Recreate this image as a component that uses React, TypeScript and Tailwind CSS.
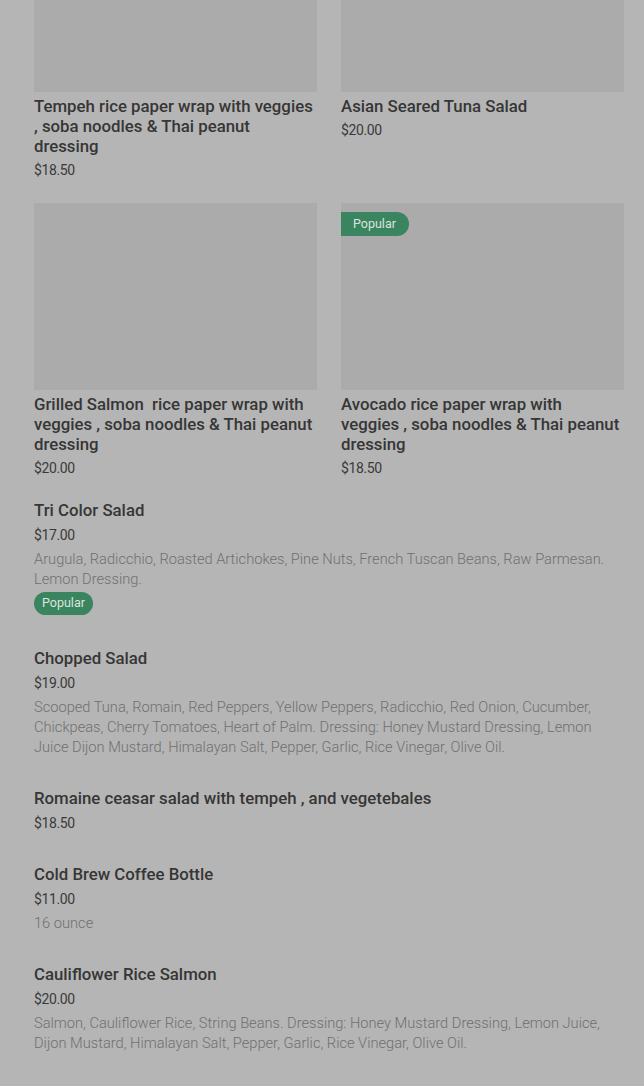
type GridItem = {
  title: string;
  price: string;
  popular?: boolean;
};

type ListItem = {
  title: string;
  price: string;
  description?: string;
  popular?: boolean;
};

const gridItems: GridItem[] = [
  { title: 'Tempeh rice paper wrap with veggies , soba noodles & Thai peanut dressing', price: '$18.50' },
  { title: 'Asian Seared Tuna Salad', price: '$20.00' },
  { title: 'Grilled Salmon\u00a0 rice paper wrap with veggies , soba noodles & Thai peanut dressing', price: '$20.00' },
  { title: 'Avocado rice paper wrap with veggies , soba noodles & Thai peanut dressing', price: '$18.50', popular: true },
];

const listItems: ListItem[] = [
  {
    title: 'Tri Color Salad',
    price: '$17.00',
    description: 'Arugula, Radicchio, Roasted Artichokes, Pine Nuts, French Tuscan Beans, Raw Parmesan. Lemon Dressing.',
    popular: true,
  },
  {
    title: 'Chopped Salad',
    price: '$19.00',
    description:
      'Scooped Tuna, Romain, Red Peppers, Yellow Peppers, Radicchio, Red Onion, Cucumber, Chickpeas, Cherry Tomatoes, Heart of Palm. Dressing: Honey Mustard Dressing, Lemon Juice Dijon Mustard, Himalayan Salt, Pepper, Garlic, Rice Vinegar, Olive Oil.',
  },
  { title: 'Romaine ceasar salad with tempeh , and vegetebales', price: '$18.50' },
  { title: 'Cold Brew Coffee Bottle', price: '$11.00', description: '16 ounce' },
  {
    title: 'Cauliflower Rice Salmon',
    price: '$20.00',
    description:
      'Salmon, Cauliflower Rice, String Beans. Dressing: Honey Mustard Dressing, Lemon Juice, Dijon Mustard, Himalayan Salt, Pepper, Garlic, Rice Vinegar, Olive Oil.',
  },
  { title: 'Grilled Chicken Caesar Wrap with Romaine & Parmesan', price: '$16.00' },
];

function Badge({ onImage }: { onImage?: boolean }) {
  return (
    <span
      className={
        onImage
          ? 'inline-flex items-center h-[24px] pl-[12px] pr-[13px] rounded-r-full bg-[#3b8460] text-[12.5px] text-[#d9e6de]'
          : 'inline-flex items-center h-[23px] px-[8px] rounded-full bg-[#3b8460] text-[12.5px] text-[#d9e6de]'
      }
    >
      Popular
    </span>
  );
}

export default function App() {
  return (
    <div className="min-h-[1086px] bg-[#b5b5b5] pl-[34px] pr-[20px] overflow-hidden font-['Roboto',sans-serif]">
      {/* Featured grid */}
      <div className="grid grid-cols-2 gap-x-[24px] gap-y-[23px] -mt-[95px]">
        {gridItems.map((item, i) => (
          <div key={i} className="flex flex-col">
            <div className="relative h-[187px] bg-[#ababab]">
              {item.popular && (
                <div className="absolute top-[8px] left-0">
                  <Badge onImage />
                </div>
              )}
            </div>
            <h3 className="mt-[4px] text-[16.8px] leading-[20px] font-medium text-[#363636]">{item.title}</h3>
            <p className="mt-[4px] text-[14px] leading-[20px] tracking-[-0.4px] text-[#3a3a3a]">{item.price}</p>
          </div>
        ))}
      </div>

      {/* Item list */}
      <div className="mt-[22px] flex flex-col gap-[31px]">
        {listItems.map((item, i) => (
          <div key={i} className="flex flex-col items-start">
            <h3 className="text-[16.8px] leading-[20px] font-medium text-[#363636]">{item.title}</h3>
            <p className="mt-[5px] text-[14px] leading-[20px] tracking-[-0.4px] text-[#3a3a3a]">{item.price}</p>
            {item.description && (
              <p className="mt-[4px] text-[14.65px] leading-[20px] font-light text-[#707070]">{item.description}</p>
            )}
            {item.popular && (
              <div className="mt-[1px] mb-[2px]">
                <Badge />
              </div>
            )}
          </div>
        ))}
      </div>
    </div>
  );
}
